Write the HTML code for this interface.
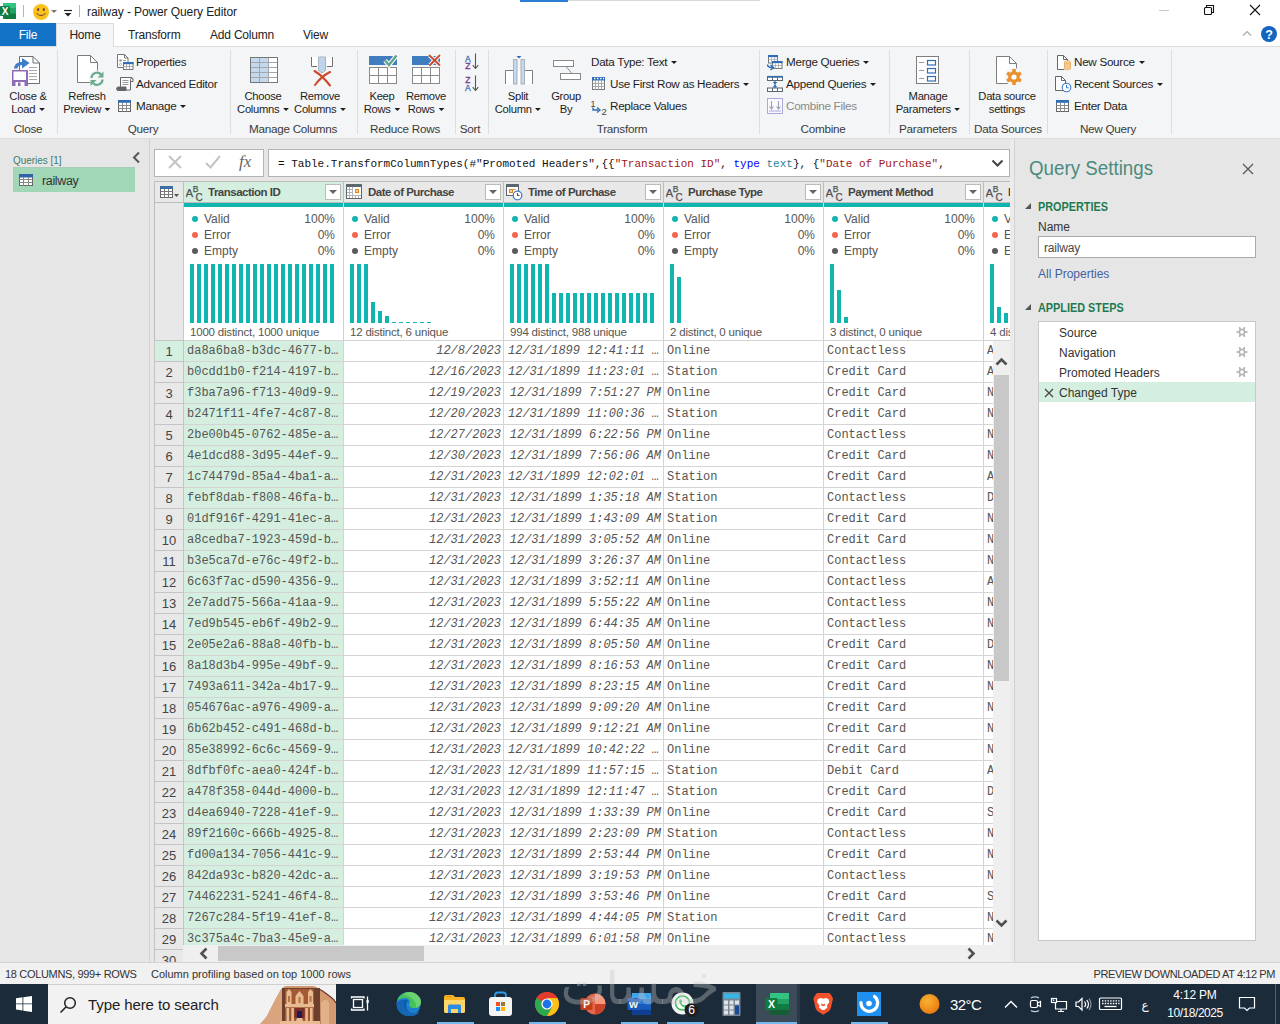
<!DOCTYPE html>
<html lang="en"><head><meta charset="utf-8"><title>railway - Power Query Editor</title>
<style>
*{box-sizing:border-box;margin:0;padding:0}
html,body{width:1280px;height:1024px;overflow:hidden;background:#e6e6e6;font-family:"Liberation Sans",sans-serif;font-size:12px;color:#262626}
body{position:relative}
.abs{position:absolute}
/* title bar */
#title{position:absolute;left:0;top:0;width:1280px;height:46px;background:#fff}
#title .tt{position:absolute;left:87px;top:5px;font-size:12px;color:#222;white-space:nowrap;letter-spacing:-0.1px}
.tab{position:absolute;top:23px;height:23px;line-height:25px;font-size:12px;letter-spacing:-0.2px;color:#222;text-align:center;white-space:nowrap}
#tfile{left:0;width:56px;background:#1272c6;color:#fff}
#thome{left:56px;width:58px;background:#f4f5f6;border:1px solid #dcdcdc;border-bottom:none;height:24px;line-height:23px}
/* ribbon */
#ribbon{z-index:1;position:absolute;left:0;top:46px;width:1280px;height:93px;background:#f4f5f6;border-top:1px solid #dcdcdc;border-bottom:1px solid #dcdcdc}
#thome{z-index:2}
.rsep{position:absolute;top:3px;width:1px;height:84px;background:#dedede}
.gl{position:absolute;top:75px;height:14px;line-height:14px;font-size:11.7px;letter-spacing:-0.25px;color:#3a3a3a;text-align:center;white-space:nowrap;transform:translateX(-50%)}
.big{position:absolute;top:42px;font-size:11.7px;line-height:13px;letter-spacing:-0.3px;color:#1e1e1e;text-align:center;white-space:nowrap;transform:translateX(-50%) scaleX(0.96)}
.sm{position:absolute;font-size:11.7px;line-height:14px;height:14px;letter-spacing:-0.3px;color:#1e1e1e;white-space:nowrap}
.sm.dis{color:#8a8a8a}
.ar{display:inline-block;width:0;height:0;border-left:3px solid transparent;border-right:3px solid transparent;border-top:3px solid #1e1e1e;vertical-align:middle;margin-left:4px;position:relative;top:0px}
.ico{position:absolute}
/* left pane */
#qp{position:absolute;left:0;top:139px;width:149px;height:823px;background:#e6e6e6}
#qsplit{position:absolute;left:149px;top:139px;width:1px;height:823px;background:#d2d2d2}
#qp .hd{position:absolute;left:13px;top:15px;font-size:11.5px;color:#3a7d6c;white-space:nowrap;transform:scaleX(0.86);transform-origin:0 0}
#qp .it{position:absolute;left:13px;top:28px;width:122px;height:25px;background:#a1d6b6;border-top:1px solid #aacbb8}
#qp .it span{position:absolute;left:29px;top:6px;font-size:12.5px;color:#333;letter-spacing:-0.35px}
/* formula bar */
.fbox{position:absolute;top:149px;height:28px;background:#fff;border:1px solid #b4b4b4}
#f1{left:154px;width:110px}
#f2{left:268px;width:742px}
#f2 .fx{position:absolute;left:9px;top:8px;font-family:"Liberation Mono",monospace;font-size:11px;white-space:pre;color:#111;letter-spacing:0px}
/* grid */
#grid{position:absolute;left:154px;top:181px;width:856px;height:781px;overflow:hidden;background:#e6e6e6}
#grid .corner{position:absolute;left:0;top:0;width:30px;height:22px;background:#e8e8e8;border:1px solid #bdbdbd}
#grid .rnhead{position:absolute;left:0;top:22px;width:30px;height:138px;background:#e8e8e8;border-left:1px solid #bdbdbd;border-right:1px solid #c8c8c8}
.ch{position:absolute;top:0;width:160px;height:22px;background:#e8e8e8;border:1px solid #bdbdbd;border-left:none;white-space:nowrap;overflow:hidden}
.ch.sel{background:#d4efdf}
.ch .ti{position:absolute;left:2px;top:2px}
.ch .cn{position:absolute;left:24px;top:4px;font-size:11.5px;font-weight:700;color:#444;letter-spacing:-0.5px}
.ch .dd{position:absolute;right:2px;top:2px;width:16px;height:16px;background:#fff;border:1px solid #bbb}
.ch .dd i{position:absolute;left:3px;top:5px;border-left:4px solid transparent;border-right:4px solid transparent;border-top:4px solid #666}
.teal{position:absolute;top:22px;width:159px;height:4px;background:#0fb5ae}
.prof{position:absolute;top:26px;width:160px;height:134px;background:#fff;border-right:1px solid #d0d0d0;overflow:hidden}
.pl{position:absolute;left:0;width:159px;height:15px;font-size:12px;color:#555}
.pl i{position:absolute;left:8px;top:4px;width:6px;height:6px;border-radius:50%}
.pl span{position:absolute;left:20px;top:0}
.pl b{position:absolute;right:8px;top:0;font-weight:400}
.bars{position:absolute;left:0;top:57px;width:159px;height:59px}
.bars i{position:absolute;bottom:0;background:#0fb5ae}
.ds{position:absolute;left:6px;top:119px;font-size:11.5px;line-height:13px;color:#555;white-space:nowrap;letter-spacing:-0.2px}
.row{position:absolute;left:0;width:860px;height:21px;border-top:1px solid #d4d4d4;background:#fff}
.rn{position:absolute;left:0;top:-1px;width:30px;height:22px;background:#e8e8e8;border:1px solid #c4c4c4;border-bottom:none;text-align:center;font-size:13px;line-height:22px;color:#444}
.row.first .rn{background:#d4efdf}
.c{position:absolute;top:0;height:20px;width:160px;border-right:1px solid #d4d4d4;font-family:"Liberation Mono",monospace;font-size:12px;line-height:21px;color:#555;white-space:pre;overflow:hidden;padding-left:3px}
.c1{left:30px;width:160px;background:#d4efdf}
.c2{left:190px;text-align:right;padding-right:2px;font-style:italic}
.c3{left:350px;font-style:italic;text-align:right;padding-right:2px;padding-left:0}
.c3.el{text-align:left;padding-left:4px;padding-right:0}
.c4{left:510px}
.c5{left:670px}
.c6{left:830px;border-right:none}
.vsb{position:absolute;left:839px;top:160px;width:17px;height:604px;background:#efefef}
.vth{position:absolute;left:1px;top:34px;width:15px;height:306px;background:#c8c8c8}
.hsb{position:absolute;left:29px;top:764px;width:827px;height:17px;background:#efefef}
.hth{position:absolute;left:35px;top:1px;width:206px;height:15px;background:#c8c8c8}
/* right pane */
#qs{position:absolute;left:1016px;top:138px;width:264px;height:824px;background:#e6e6e6}
#rsplit{position:absolute;left:1010px;top:139px;width:5px;height:823px;background:#ebebeb;border-right:1px solid #d2d2d2}
#qs .h1{position:absolute;left:13px;top:18px;font-size:20.5px;color:#4b8b7f;white-space:nowrap;transform:scaleX(0.915);transform-origin:0 0}
#qs .sec{position:absolute;left:22px;margin-top:1px;font-size:12.5px;font-weight:700;color:#217a50;white-space:nowrap;transform:scaleX(0.868);transform-origin:0 0}
#qs .tri{position:absolute;left:9px;width:0;height:0;border-left:6px solid transparent;border-bottom:6px solid #555}
#qs .lbl{position:absolute;left:22px;font-size:12px;color:#333}
#qs .inp{position:absolute;left:22px;top:98px;width:218px;height:22px;background:#fff;border:1px solid #ababab;font-size:12px;color:#484848;line-height:22px;padding-left:5px;letter-spacing:-0.2px}
#qs .lnk{position:absolute;left:22px;top:129px;font-size:12px;color:#44619d}
#qs .steps{position:absolute;left:22px;top:183px;width:218px;height:620px;background:#fff;border:1px solid #c9c9c9}
#qs .st{position:absolute;left:0;width:216px;height:20px;line-height:22px;font-size:12px;color:#333;padding-left:20px;white-space:nowrap}
#qs .st.on{background:#d4efdf}
#qs .gear{position:absolute;left:197px;top:4px}
/* status bar */
#status{position:absolute;left:0;top:962px;width:1280px;height:22px;background:#f1f1f1;border-top:1px solid #d4d4d4;font-size:11px;color:#333}
#status span{position:absolute;top:5px;white-space:nowrap}
/* taskbar */
#task{position:absolute;left:0;top:984px;width:1280px;height:40px;background:#1c2b3a;overflow:hidden}
#task .search{position:absolute;left:48px;top:0;width:288px;height:40px;background:#f2f2f2;border-top:1px solid #cfcfcf}
#task .search span{position:absolute;left:40px;top:11px;font-size:15px;color:#222;letter-spacing:-0.1px;white-space:nowrap}
.ul{position:absolute;top:38px;height:2px;background:#76b9ed}

#wm{position:absolute;left:546px;top:970px;width:188px;height:38px;overflow:hidden;pointer-events:none}
#wm span{position:absolute;left:0;top:-25px;width:188px;font-family:"DejaVu Sans",sans-serif;font-size:56px;line-height:80px;color:rgba(198,198,198,0.37);white-space:nowrap;direction:rtl;text-align:center;transform:scaleX(0.85);transform-origin:50% 50%}

</style></head>
<body>
<div id="title">
 <div class="abs" style="left:520px;top:0;width:48px;height:2px;background:#2b7cd3"></div>
 <div class="abs" style="left:568px;top:0;width:192px;height:1px;background:#d9d9d9"></div>
 <!-- excel icon -->
 <svg class="abs" style="left:0;top:3px" width="17" height="17" viewBox="0 0 17 17">
  <rect x="3" y="0" width="13" height="16" rx="1" fill="#21a366"/><rect x="3" y="0" width="13" height="5" rx="1" fill="#33c481"/><rect x="3" y="10.500" width="13" height="5.500" rx="1" fill="#107c41"/>
  <rect x="0" y="3" width="10" height="10" rx="1" fill="#107c41"/>
  <text x="5" y="11.600" font-size="10" font-weight="700" fill="#fff" text-anchor="middle" font-family="Liberation Sans, sans-serif">X</text>
 </svg>
 <div class="abs" style="left:23px;top:5px;width:1px;height:12px;background:#b5b5b5"></div>
 <svg class="abs" style="left:32px;top:3px" width="18" height="18" viewBox="0 0 18 18"><circle cx="9" cy="9" r="8" fill="#fcc21b"/><ellipse cx="6.200" cy="6.500" rx="1" ry="1.600" fill="#5a3b4a"/><ellipse cx="11.800" cy="6.500" rx="1" ry="1.600" fill="#5a3b4a"/><path d="M4.8 10.5c1.2 2.6 7.2 2.6 8.4 0" fill="none" stroke="#5a3b4a" stroke-width="1" stroke-linecap="round"/></svg>
 <div class="abs" style="left:51px;top:10px;border-left:3px solid transparent;border-right:3px solid transparent;border-top:3px solid #777"></div>
 <svg class="abs" style="left:63px;top:9px" width="10" height="9" viewBox="0 0 10 9"><path d="M1 1.5h8" stroke="#222" stroke-width="1.2"/><path d="M1.5 4h7l-3.500 3.500z" fill="#222"/></svg>
 <div class="abs" style="left:79px;top:5px;width:1px;height:12px;background:#b5b5b5"></div>
 <div class="tt">railway - Power Query Editor</div>
 <!-- window controls -->
 <div class="abs" style="left:1159px;top:10px;width:10px;height:1px;background:#c8c8c8"></div>
 <svg class="abs" style="left:1203px;top:4px" width="12" height="12" viewBox="0 0 12 12"><path d="M3.500 3V1.500h7v7H9" fill="none" stroke="#111" stroke-width="1.1"/><rect x="1.500" y="3.500" width="7" height="7" rx="1" fill="none" stroke="#111" stroke-width="1.100"/></svg>
 <svg class="abs" style="left:1249px;top:4px" width="12" height="12" viewBox="0 0 12 12"><path d="M1 1l10 10M11 1L1 11" stroke="#111" stroke-width="1.1"/></svg>
 <svg class="abs" style="left:1242px;top:30px" width="10" height="7" viewBox="0 0 10 7"><path d="M1 5.500l4-4 4 4" fill="none" stroke="#a8a8a8" stroke-width="1.100"/></svg>
 <svg class="abs" style="left:1260px;top:25px" width="18" height="18" viewBox="0 0 18 18"><circle cx="9" cy="9" r="8" fill="#1565c0"/><text x="9" y="13.500" font-size="12.500" font-weight="700" fill="#fff" text-anchor="middle" font-family="Liberation Sans, sans-serif">?</text></svg>
</div>
<div class="tab" id="tfile">File</div>
<div class="tab" id="thome">Home</div>
<div class="tab" style="left:128px">Transform</div>
<div class="tab" style="left:210px">Add Column</div>
<div class="tab" style="left:303px">View</div>
<div id="ribbon">
 <div class="rsep" style="left:57px"></div><div class="rsep" style="left:230px"></div><div class="rsep" style="left:357px"></div>
 <div class="rsep" style="left:455px"></div><div class="rsep" style="left:488px"></div><div class="rsep" style="left:759px"></div>
 <div class="rsep" style="left:889px"></div><div class="rsep" style="left:969px"></div><div class="rsep" style="left:1047px"></div><div class="rsep" style="left:1171px"></div>
 <div class="gl" style="left:28px">Close</div><div class="gl" style="left:143px">Query</div><div class="gl" style="left:293px">Manage Columns</div>
 <div class="gl" style="left:405px">Reduce Rows</div><div class="gl" style="left:470px">Sort</div><div class="gl" style="left:622px">Transform</div>
 <div class="gl" style="left:823px">Combine</div><div class="gl" style="left:928px">Parameters</div><div class="gl" style="left:1008px">Data Sources</div><div class="gl" style="left:1108px">New Query</div>
 <div class="big" style="left:28px">Close &amp;<br>Load<span class="ar"></span></div>
 <div class="big" style="left:87px">Refresh<br>Preview<span class="ar"></span></div>
 <div class="big" style="left:263px">Choose<br>Columns<span class="ar"></span></div>
 <div class="big" style="left:320px">Remove<br>Columns<span class="ar"></span></div>
 <div class="big" style="left:382px">Keep<br>Rows<span class="ar"></span></div>
 <div class="big" style="left:426px">Remove<br>Rows<span class="ar"></span></div>
 <div class="big" style="left:518px">Split<br>Column<span class="ar"></span></div>
 <div class="big" style="left:566px">Group<br>By</div>
 <div class="big" style="left:928px">Manage<br>Parameters<span class="ar"></span></div>
 <div class="big" style="left:1007px">Data source<br>settings</div>
 <div class="sm" style="left:136px;top:8px">Properties</div>
 <div class="sm" style="left:136px;top:30px">Advanced Editor</div>
 <div class="sm" style="left:136px;top:52px">Manage<span class="ar"></span></div>
 <div class="sm" style="left:591px;top:8px">Data Type: Text<span class="ar"></span></div>
 <div class="sm" style="left:610px;top:30px">Use First Row as Headers<span class="ar"></span></div>
 <div class="sm" style="left:610px;top:52px">Replace Values</div>
 <div class="sm" style="left:786px;top:8px">Merge Queries<span class="ar"></span></div>
 <div class="sm" style="left:786px;top:30px">Append Queries<span class="ar"></span></div>
 <div class="sm dis" style="left:786px;top:52px">Combine Files</div>
 <div class="sm" style="left:1074px;top:8px">New Source<span class="ar"></span></div>
 <div class="sm" style="left:1074px;top:30px">Recent Sources<span class="ar"></span></div>
 <div class="sm" style="left:1074px;top:52px">Enter Data</div>
<svg class="abs" style="left:0;top:0" width="1280" height="90" viewBox="0 47 1280 90" font-family="Liberation Sans, sans-serif">
 <!-- Close & Load -->
 <g>
  <path d="M19.500 56.500h13.500l6.500 6.500v20.500h-20z" fill="#fff" stroke="#6e6e6e"/>
  <path d="M33 56.500v6.500h6.500" fill="none" stroke="#6e6e6e"/>
  <path d="M29 67.500h8M29 70.500h8M29 73.500h8M29 76.500h8M29 79.500h8" stroke="#a8a8a8"/>
  <path d="M14 68.600C14.500 64 17.500 62 22 62v-4l7.600 5-7.600 5.600V65c-2.500 0-4.200 1-4.800 3.600z" fill="#3d7cc9"/>
  <rect x="12" y="70" width="16" height="16" rx="0.500" fill="#8f6cb5"/>
  <rect x="13.500" y="71.500" width="12.500" height="8.500" fill="#fff"/>
  <rect x="15.500" y="82" width="9" height="4" fill="#fff"/><rect x="18" y="82.500" width="2.500" height="3.500" fill="#8f6cb5"/>
 </g>
 <!-- Refresh Preview -->
 <g>
  <path d="M77.500 55.500h13l7 7v20h-20z" fill="#fff" stroke="#7d7d7d"/>
  <path d="M90.500 55.500v7h7" fill="none" stroke="#7d7d7d"/>
  <circle cx="97" cy="78.500" r="8" fill="#f4f5f6"/>
  <path d="M91.500 78a5.500 5.500 0 0 1 9.600-3.500" fill="none" stroke="#6bab8f" stroke-width="2.200"/>
  <path d="M103.500 71.500v6h-6z" fill="#6bab8f"/>
  <path d="M102.500 79.500a5.500 5.500 0 0 1-9.600 3.500" fill="none" stroke="#6bab8f" stroke-width="2.200"/>
  <path d="M90.500 86v-6h6z" fill="#6bab8f"/>
 </g>
 <!-- Properties -->
 <g>
  <path d="M117.500 54.500h7l3.500 3.500v9.500h-10.500z" fill="#fff" stroke="#777"/>
  <path d="M124.500 54.500v3.500h3.500" fill="none" stroke="#777"/>
  <circle cx="120.500" cy="60.500" r="1.300" fill="#999"/><path d="M123 60.500h3" stroke="#999"/><circle cx="120.500" cy="64.500" r="1.100" fill="none" stroke="#999" stroke-width="0.700"/>
  <rect x="123.500" y="62.500" width="9.500" height="7" fill="#fff" stroke="#777"/><rect x="123" y="62" width="10.500" height="2.200" fill="#2f6db5"/>
  <path d="M123.500 66.500h9.500M126.500 64v5.500M129.500 64v5.500" stroke="#999" stroke-width="0.800"/>
 </g>
 <!-- Advanced Editor -->
 <g>
  <path d="M120.500 77.500h10.500c1.500 0 2 1 2 2v2h-2.500v8.500h-10v-3.500h0z" fill="#fff" stroke="#666"/>
  <path d="M130.500 81.500v-2c0-1.500 2.300-1.500 2.300 0" fill="none" stroke="#666"/>
  <path d="M122.500 80.500h6M122.500 82.500h6M122.500 84.500h6" stroke="#9a9a9a"/>
  <path d="M118 87h8v3.500h-8c-1.800 0-1.800-3.500 0-3.500z" fill="#666" stroke="#666"/>
 </g>
 <!-- Manage -->
 <g>
  <rect x="118.500" y="100.500" width="12" height="11" fill="#fff" stroke="#666"/><rect x="118" y="100" width="13" height="2.800" fill="#2f6db5"/>
  <path d="M118.500 105.500h12M118.500 108.500h12M122.500 103v8.500M126.500 103v8.500" stroke="#8a8a8a"/>
 </g>
 <!-- Choose Columns -->
 <g>
  <rect x="250.500" y="57.500" width="27" height="25" fill="#fff" stroke="#8a8a8a"/>
  <rect x="251" y="58" width="18" height="24" fill="#c5d9ee"/>
  <path d="M250.500 62.500h27M250.500 67.500h27M250.500 72.500h27M250.500 77.500h27M259.500 57.500v25M268.500 57.500v25" stroke="#a3a7ad" fill="none"/>
  <rect x="250.500" y="57.500" width="27" height="25" fill="none" stroke="#777"/>
 </g>
 <!-- Remove Columns -->
 <g>
  <path d="M311.500 57v9.500h6v-9.500zM332.500 57v9.500h-6v-9.500z" fill="#fff" stroke="none"/>
  <path d="M311.500 57v9.500h5.500M332.500 57v9.500h-5.500" fill="none" stroke="#707070"/>
  <path d="M318.500 57v13.500l3.500 2.500 3.500-2.500v-13.500z" fill="#c0d4ea" stroke="#a8b4c0"/>
  <path d="M314.500 71c5 3 10.500 8 15.500 14.500M330 72c-6 3-11 7.500-15 13" fill="none" stroke="#cc4a2b" stroke-width="2.100" stroke-linecap="round"/>
 </g>
 <!-- Keep Rows -->
 <g>
  <rect x="369" y="56" width="28" height="9" fill="#3f7dbf"/>
  <rect x="369.500" y="67.500" width="27" height="16" fill="#fff" stroke="#8a8a8a"/>
  <path d="M369.500 75.500h27M378.500 67.500v16M387.500 67.500v16" stroke="#8a8a8a" fill="none"/>
  <path d="M385 60.500l4 4.500 7.500-9.500" fill="none" stroke="#f4f5f6" stroke-width="4.500"/>
  <path d="M385 60.500l4 4.500 7.500-9.500" fill="none" stroke="#5fa585" stroke-width="2.300"/>
 </g>
 <!-- Remove Rows -->
 <g>
  <rect x="412" y="56" width="28" height="9" fill="#3f7dbf"/>
  <rect x="412.500" y="67.500" width="27" height="16" fill="#fff" stroke="#8a8a8a"/>
  <path d="M412.500 75.500h27M421.500 67.500v16M430.500 67.500v16" stroke="#8a8a8a" fill="none"/>
  <path d="M429.500 55.500l10 9.500M439.500 55.500l-9.500 9.500" fill="none" stroke="#f4f5f6" stroke-width="4"/>
  <path d="M429.500 55.500l10 9.500M439.500 55.500l-9.500 9.500" fill="none" stroke="#cc4a2b" stroke-width="1.800" stroke-linecap="round"/>
 </g>
 <!-- Sort -->
 <g font-size="8.500" font-weight="400" stroke-width="0.300">
  <text x="465" y="61.500" fill="#3b6fb5" stroke="#3b6fb5">A</text><text x="465.300" y="69" fill="#7a3b8c" stroke="#7a3b8c">Z</text>
  <path d="M475.500 53.500v14.500M472.700 65.200l2.800 3.300 2.800-3.300" fill="none" stroke="#555" stroke-width="1.100"/>
  <text x="465.300" y="83" fill="#7a3b8c" stroke="#7a3b8c">Z</text><text x="465" y="90.500" fill="#3b6fb5" stroke="#3b6fb5">A</text>
  <path d="M475.500 75.500v14.500M472.700 87.200l2.800 3.300 2.800-3.300" fill="none" stroke="#555" stroke-width="1.100"/>
 </g>
 <!-- Split Column -->
 <g>
  <rect x="505.500" y="70.500" width="27" height="14" fill="#fff" stroke="none"/>
  <path d="M505.500 84v-13.500h7.500M525 70.500h7.500v13.500" fill="none" stroke="#7d7d7d"/>
  <rect x="513.500" y="59.500" width="3.500" height="24.500" fill="#c5d9ee" stroke="#a9b0b8"/>
  <rect x="521" y="59.500" width="3.500" height="24.500" fill="#c5d9ee" stroke="#a9b0b8"/>
  <path d="M516.500 56h5l-2.500 2.500z" fill="#2f6db5"/>
 </g>
 <!-- Group By -->
 <g>
  <rect x="553.500" y="60.500" width="20" height="6" fill="#fff" stroke="#8a8a8a"/>
  <rect x="560.500" y="73.500" width="20" height="6" fill="#fff" stroke="#8a8a8a"/>
  <path d="M566 66.500l6 7" stroke="#8a8a8a"/>
 </g>
 <!-- Use first row -->
 <g>
  <rect x="592.500" y="77.500" width="12" height="12" fill="#fff" stroke="#777"/>
  <rect x="592" y="77" width="13" height="3.500" fill="#2f6db5"/>
  <path d="M594 78.500h1.500M597 78.500h1.500M600 78.500h1.500M603 78.500h1" stroke="#fff" stroke-width="1.500"/>
  <path d="M592.500 83.500h12M592.500 86.500h12M595.500 80.500v9M598.500 80.500v9M601.500 80.500v9" stroke="#a0a0a0" stroke-width="0.900"/>
 </g>
 <!-- Replace values -->
 <g font-size="8">
  <text x="590.500" y="106.500" font-size="9" fill="#444">1</text><text x="601.500" y="115" font-size="9.500" fill="#444">2</text>
  <path d="M593 107.500v2.500h5.500" fill="none" stroke="#2f6db5" stroke-width="1.400"/><path d="M597 107.500l3 2.500-3 2.500" fill="none" stroke="#2f6db5" stroke-width="1.400"/>
 </g>
 <!-- Merge Queries -->
 <g>
  <rect x="768.500" y="55.500" width="9" height="7.500" fill="#fff" stroke="#777"/><rect x="768" y="55" width="10" height="2.200" fill="#2f6db5"/>
  <path d="M768.500 59.500h9M771.500 57.500v5.500M774.500 57.500v5.500" stroke="#aaa" stroke-width="0.800"/>
  <rect x="772.500" y="61.500" width="9.500" height="7" fill="#fff" stroke="#777"/><rect x="772" y="61" width="10.500" height="2.200" fill="#2f6db5"/>
  <path d="M772.500 65.500h9.500M775.500 63.500v5M778.500 63.500v5" stroke="#aaa" stroke-width="0.800"/>
  <path d="M767.500 64.500c0 2 1 3 4.500 3" fill="none" stroke="#2f6db5" stroke-width="1.500"/><path d="M770.500 65l3 2.500-3 2.500" fill="none" stroke="#2f6db5" stroke-width="1.500"/>
 </g>
 <!-- Append Queries -->
 <g>
  <rect x="767.500" y="77" width="15" height="3.500" fill="#fff" stroke="#5c666e"/><path d="M767 76.700h16" stroke="#2f6db5" stroke-width="1.600"/><path d="M772.500 77.500v3M777.500 77.500v3" stroke="#5c666e"/>
  <rect x="767.500" y="88" width="15" height="3.500" fill="#fff" stroke="#5c666e"/><path d="M772.500 88v3.500M777.500 88v3.500" stroke="#5c666e"/>
  <path d="M775 81v7" stroke="#2f6db5" stroke-width="1.200"/><path d="M772.500 82h5l-2.500 2.300zM772.500 87.200h5l-2.500-2.300z" fill="#2f6db5"/>
 </g>
 <!-- Combine Files -->
 <g>
  <rect x="767.500" y="98.500" width="15" height="15" fill="#fafaff" stroke="#a9a9dc"/>
  <path d="M771.500 101v7M778.500 101v7" stroke="#9aa0b4" stroke-width="1.100"/><path d="M769.500 106.500l2 2.500 2-2.500M776.500 106.500l2 2.500 2-2.500" fill="none" stroke="#9aa0b4" stroke-width="1.100"/>
  <path d="M769 111h12" stroke="#a9a9dc"/>
 </g>
 <!-- Manage Parameters -->
 <g>
  <rect x="916.500" y="56.500" width="22" height="27" fill="#fff" stroke="#7d7d7d"/>
  <path d="M919 62.500h5M919 70.500h5M919 78.500h5" stroke="#9a9a9a"/>
  <rect x="927.500" y="60.500" width="8" height="4.500" fill="#fff" stroke="#2f6db5" stroke-width="1.200"/>
  <rect x="927.500" y="68.500" width="8" height="4.500" fill="#fff" stroke="#2f6db5" stroke-width="1.200"/>
  <rect x="927.500" y="76.500" width="8" height="4.500" fill="#fff" stroke="#2f6db5" stroke-width="1.200"/>
 </g>
 <!-- Data source settings -->
 <g>
  <path d="M996.500 56.500h13l7 7v20h-20z" fill="#fff" stroke="#7d7d7d"/>
  <path d="M1009.500 56.500v7h7" fill="none" stroke="#7d7d7d"/>
  <circle cx="1014" cy="77" r="9" fill="#f4f5f6"/>
  <g fill="#e8912d">
   <circle cx="1014" cy="77" r="5.800"/>
   <rect x="1012.200" y="69" width="3.600" height="16" rx="0.500"/>
   <rect x="1012.200" y="69" width="3.600" height="16" rx="0.500" transform="rotate(60 1014 77)"/>
   <rect x="1012.200" y="69" width="3.600" height="16" rx="0.500" transform="rotate(120 1014 77)"/>
  </g>
  <circle cx="1014" cy="77" r="2.600" fill="#fff"/>
 </g>
 <!-- New Source -->
 <g>
  <path d="M1057.500 55.500h6l4 4v10h-10z" fill="#fff" stroke="#666"/><path d="M1063.500 55.500v4h4" fill="none" stroke="#666"/>
  <rect x="1064" y="61" width="7.500" height="9" rx="1" fill="#f4f5f6"/>
  <path d="M1064.500 62v6.500c0 1.600 6 1.600 6 0v-6.500" fill="#f2c98f" stroke="#e8a95a" stroke-width="0.800"/><ellipse cx="1067.500" cy="62" rx="3" ry="1.200" fill="#f7dcb4" stroke="#e8a95a" stroke-width="0.800"/>
 </g>
 <!-- Recent Sources -->
 <g>
  <path d="M1055.500 76.500h6l4 4v10h-10z" fill="#fff" stroke="#666"/><path d="M1061.500 76.500v4h4" fill="none" stroke="#666"/>
  <circle cx="1066.500" cy="87.500" r="4.300" fill="#fff" stroke="#3d7cc9" stroke-width="1.100"/><path d="M1066.500 85v2.800h2.200" fill="none" stroke="#3d7cc9" stroke-width="1"/>
 </g>
 <!-- Enter Data -->
 <g>
  <rect x="1056.500" y="100.500" width="12" height="11" fill="#fff" stroke="#666"/><rect x="1056" y="100" width="13" height="2.800" fill="#2f6db5"/>
  <path d="M1056.500 105.500h12M1056.500 108.500h12M1060.500 103v8.500M1064.500 103v8.500" stroke="#8a8a8a"/>
 </g>
</svg>

</div>

<div id="qp"><div class="hd">Queries [1]</div>
 <svg class="abs" style="left:132px;top:12px" width="9" height="13" viewBox="0 0 9 13"><path d="M7 1.500l-5 5 5 5" fill="none" stroke="#555" stroke-width="2"/></svg>
 <div class="it"><svg class="abs" style="left:6px;top:6px" width="14" height="12" viewBox="0 0 14 12"><rect x="0.500" y="0.500" width="13" height="11" fill="#fff" stroke="#666"/><rect x="0.500" y="0.500" width="13" height="2.500" fill="#2f64a8" stroke="#2f64a8"/><path d="M0.500 5.500h13M0.500 8.500h13M4.500 3v9M9.500 3v9" stroke="#888" fill="none"/></svg><span>railway</span></div>
</div>
<div id="qsplit"></div>
<div class="fbox" id="f1">
 <svg class="abs" style="left:13px;top:5px" width="14" height="14" viewBox="0 0 14 14"><path d="M1 1l12 12M13 1L1 13" stroke="#c4c4c4" stroke-width="2"/></svg>
 <svg class="abs" style="left:50px;top:5px" width="16" height="14" viewBox="0 0 16 14"><path d="M1 8l4.500 4.500L15 1" fill="none" stroke="#c4c4c4" stroke-width="2"/></svg>
 <div class="abs" style="left:84px;top:2px;font-family:'Liberation Serif',serif;font-style:italic;font-size:17px;color:#666">fx</div>
</div>
<div class="fbox" id="f2"><div class="fx">= Table.TransformColumnTypes(#"Promoted Headers",{{<span style="color:#a31515">"Transaction ID"</span>, <span style="color:#0000ff">type</span> <span style="color:#2b7f9e">text</span>}, {<span style="color:#a31515">"Date of Purchase"</span>,</div>
 <svg class="abs" style="left:722px;top:9px" width="13" height="9" viewBox="0 0 13 9"><path d="M1.500 1.500l5 5 5-5" fill="none" stroke="#444" stroke-width="2"/></svg>
</div>

<div id="grid">
<div class="corner"><svg width="24" height="14" viewBox="0 0 24 14" style="position:absolute;left:5px;top:4px"><rect x="0.5" y="0.5" width="12" height="11" fill="#fff" stroke="#666"/><rect x="0" y="0" width="13" height="3" fill="#3a6ea5"/><path d="M0.5 5.5h12M0.5 8.5h12M4.5 3v9M8.5 3v9" stroke="#7a7a7a" fill="none"/><path d="M14 8h5l-2.5 3z" fill="#555"/></svg></div>
<div class="rnhead"></div>
<div class="ch sel" style="left:30px"><svg class="ti" width="20" height="18" viewBox="0 0 20 18" font-family="Liberation Sans, sans-serif" fill="#505050" stroke="#505050" stroke-width="0.25"><text x="-0.5" y="13.3" font-size="11.5">A</text><text x="6.8" y="8.3" font-size="8.5">B</text><text x="9.5" y="17" font-size="10">C</text></svg><span class="cn">Transaction ID</span><span class="dd"><i></i></span></div>
<div class="teal" style="left:30px"></div>
<div class="prof" style="left:30px"><div class="pl" style="top:5px"><i style="background:#12b5ae"></i><span>Valid</span><b>100%</b></div><div class="pl" style="top:21px"><i style="background:#f4654e"></i><span>Error</span><b>0%</b></div><div class="pl" style="top:37px"><i style="background:#5a5a5a"></i><span>Empty</span><b>0%</b></div><div class="bars"><i style="left:6.0px;width:4px;height:59px"></i><i style="left:13.0px;width:4px;height:59px"></i><i style="left:20.0px;width:4px;height:59px"></i><i style="left:27.0px;width:4px;height:59px"></i><i style="left:34.0px;width:4px;height:59px"></i><i style="left:41.0px;width:4px;height:59px"></i><i style="left:48.0px;width:4px;height:59px"></i><i style="left:55.0px;width:4px;height:59px"></i><i style="left:62.0px;width:4px;height:59px"></i><i style="left:69.0px;width:4px;height:59px"></i><i style="left:76.0px;width:4px;height:59px"></i><i style="left:83.0px;width:4px;height:59px"></i><i style="left:90.0px;width:4px;height:59px"></i><i style="left:97.0px;width:4px;height:59px"></i><i style="left:104.0px;width:4px;height:59px"></i><i style="left:111.0px;width:4px;height:59px"></i><i style="left:118.0px;width:4px;height:59px"></i><i style="left:125.0px;width:4px;height:59px"></i><i style="left:132.0px;width:4px;height:59px"></i><i style="left:139.0px;width:4px;height:59px"></i><i style="left:146.0px;width:4px;height:59px"></i></div><div class="ds">1000 distinct, 1000 unique</div></div>
<div class="ch" style="left:190px"><svg class="ti" width="16" height="15" viewBox="0 0 16 15"><rect x="0" y="0" width="16" height="15" rx="0.5" fill="#5c666e"/><rect x="1" y="3" width="14" height="11" fill="#b4b4b4"/><g fill="#fff"><rect x="1" y="3" width="2" height="2"/><rect x="4" y="3" width="2" height="2"/><rect x="1" y="6" width="2" height="2"/><rect x="4" y="6" width="2" height="2"/><rect x="1" y="9" width="2" height="2"/><rect x="4" y="9" width="2" height="2"/><rect x="1" y="12" width="2" height="2"/><rect x="4" y="12" width="2" height="2"/><rect x="7" y="12" width="2" height="2"/><rect x="10" y="12" width="2" height="2"/><rect x="13" y="12" width="2" height="2"/><rect x="7" y="3" width="8" height="8"/></g><rect x="9.6" y="5.600" width="2.800" height="2.800" fill="#fff" stroke="#e8820e" stroke-width="1.200"/></svg><span class="cn">Date of Purchase</span><span class="dd"><i></i></span></div>
<div class="teal" style="left:190px"></div>
<div class="prof" style="left:190px"><div class="pl" style="top:5px"><i style="background:#12b5ae"></i><span>Valid</span><b>100%</b></div><div class="pl" style="top:21px"><i style="background:#f4654e"></i><span>Error</span><b>0%</b></div><div class="pl" style="top:37px"><i style="background:#5a5a5a"></i><span>Empty</span><b>0%</b></div><div class="bars"><i style="left:6.0px;width:4px;height:59px"></i><i style="left:13.0px;width:4px;height:59px"></i><i style="left:20.0px;width:4px;height:59px"></i><i style="left:27.0px;width:4px;height:21px"></i><i style="left:34.0px;width:4px;height:12px"></i><i style="left:41.0px;width:4px;height:7px"></i><i style="left:48.0px;width:4px;height:1px"></i><i style="left:55.0px;width:4px;height:1px"></i><i style="left:62.0px;width:4px;height:1px"></i><i style="left:69.0px;width:4px;height:1px"></i><i style="left:76.0px;width:4px;height:1px"></i><i style="left:83.0px;width:4px;height:1px"></i></div><div class="ds">12 distinct, 6 unique</div></div>
<div class="ch" style="left:350px"><svg class="ti" width="18" height="17" viewBox="0 0 18 17"><rect x="0" y="0" width="13" height="12" rx="0.5" fill="#5c666e"/><rect x="1" y="3" width="11" height="8" fill="#fff"/><path d="M7 5.500h3" stroke="#b4b4b4"/><rect x="3.600" y="5.600" width="2.800" height="2.800" fill="#fff" stroke="#e8820e" stroke-width="1.200"/><circle cx="11.500" cy="11.500" r="4.300" fill="#fff" stroke="#4a7fc0" stroke-width="1.300"/><path d="M11.500 9v2.500h2" stroke="#555" stroke-width="1.100" fill="none"/></svg><span class="cn">Time of Purchase</span><span class="dd"><i></i></span></div>
<div class="teal" style="left:350px"></div>
<div class="prof" style="left:350px"><div class="pl" style="top:5px"><i style="background:#12b5ae"></i><span>Valid</span><b>100%</b></div><div class="pl" style="top:21px"><i style="background:#f4654e"></i><span>Error</span><b>0%</b></div><div class="pl" style="top:37px"><i style="background:#5a5a5a"></i><span>Empty</span><b>0%</b></div><div class="bars"><i style="left:6.0px;width:4px;height:59px"></i><i style="left:13.0px;width:4px;height:59px"></i><i style="left:20.0px;width:4px;height:59px"></i><i style="left:27.0px;width:4px;height:59px"></i><i style="left:34.0px;width:4px;height:59px"></i><i style="left:41.0px;width:4px;height:59px"></i><i style="left:48.0px;width:4px;height:30px"></i><i style="left:55.0px;width:4px;height:30px"></i><i style="left:62.0px;width:4px;height:30px"></i><i style="left:69.0px;width:4px;height:30px"></i><i style="left:76.0px;width:4px;height:30px"></i><i style="left:83.0px;width:4px;height:30px"></i><i style="left:90.0px;width:4px;height:30px"></i><i style="left:97.0px;width:4px;height:30px"></i><i style="left:104.0px;width:4px;height:30px"></i><i style="left:111.0px;width:4px;height:30px"></i><i style="left:118.0px;width:4px;height:30px"></i><i style="left:125.0px;width:4px;height:30px"></i><i style="left:132.0px;width:4px;height:30px"></i><i style="left:139.0px;width:4px;height:30px"></i><i style="left:146.0px;width:4px;height:30px"></i></div><div class="ds">994 distinct, 988 unique</div></div>
<div class="ch" style="left:510px"><svg class="ti" width="20" height="18" viewBox="0 0 20 18" font-family="Liberation Sans, sans-serif" fill="#505050" stroke="#505050" stroke-width="0.25"><text x="-0.5" y="13.3" font-size="11.5">A</text><text x="6.8" y="8.3" font-size="8.5">B</text><text x="9.5" y="17" font-size="10">C</text></svg><span class="cn">Purchase Type</span><span class="dd"><i></i></span></div>
<div class="teal" style="left:510px"></div>
<div class="prof" style="left:510px"><div class="pl" style="top:5px"><i style="background:#12b5ae"></i><span>Valid</span><b>100%</b></div><div class="pl" style="top:21px"><i style="background:#f4654e"></i><span>Error</span><b>0%</b></div><div class="pl" style="top:37px"><i style="background:#5a5a5a"></i><span>Empty</span><b>0%</b></div><div class="bars"><i style="left:6.0px;width:4px;height:59px"></i><i style="left:13.0px;width:4px;height:46px"></i></div><div class="ds">2 distinct, 0 unique</div></div>
<div class="ch" style="left:670px"><svg class="ti" width="20" height="18" viewBox="0 0 20 18" font-family="Liberation Sans, sans-serif" fill="#505050" stroke="#505050" stroke-width="0.25"><text x="-0.5" y="13.3" font-size="11.5">A</text><text x="6.8" y="8.3" font-size="8.5">B</text><text x="9.5" y="17" font-size="10">C</text></svg><span class="cn">Payment Method</span><span class="dd"><i></i></span></div>
<div class="teal" style="left:670px"></div>
<div class="prof" style="left:670px"><div class="pl" style="top:5px"><i style="background:#12b5ae"></i><span>Valid</span><b>100%</b></div><div class="pl" style="top:21px"><i style="background:#f4654e"></i><span>Error</span><b>0%</b></div><div class="pl" style="top:37px"><i style="background:#5a5a5a"></i><span>Empty</span><b>0%</b></div><div class="bars"><i style="left:6.0px;width:4px;height:59px"></i><i style="left:13.0px;width:4px;height:33px"></i><i style="left:20.0px;width:4px;height:6px"></i></div><div class="ds">3 distinct, 0 unique</div></div>
<div class="ch" style="left:830px"><svg class="ti" width="20" height="18" viewBox="0 0 20 18" font-family="Liberation Sans, sans-serif" fill="#505050" stroke="#505050" stroke-width="0.25"><text x="-0.5" y="13.3" font-size="11.5">A</text><text x="6.8" y="8.3" font-size="8.5">B</text><text x="9.5" y="17" font-size="10">C</text></svg><span class="cn">R</span><span class="dd"><i></i></span></div>
<div class="teal" style="left:830px"></div>
<div class="prof" style="left:830px"><div class="pl" style="top:5px"><i style="background:#12b5ae"></i><span>Valid</span><b>100%</b></div><div class="pl" style="top:21px"><i style="background:#f4654e"></i><span>Error</span><b>0%</b></div><div class="pl" style="top:37px"><i style="background:#5a5a5a"></i><span>Empty</span><b>0%</b></div><div class="bars"><i style="left:6.0px;width:4px;height:59px"></i><i style="left:13.0px;width:4px;height:16px"></i><i style="left:20.0px;width:4px;height:10px"></i></div><div class="ds">4 distinct, 0 unique</div></div>
<div class="row first" style="top:159px"><div class="rn">1</div><div class="c c1">da8a6ba8-b3dc-4677-b…</div><div class="c c2">12/8/2023</div><div class="c c3 el">12/31/1899 12:41:11 …</div><div class="c c4">Online</div><div class="c c5">Contactless</div><div class="c c6">A</div></div>
<div class="row" style="top:180px"><div class="rn">2</div><div class="c c1">b0cdd1b0-f214-4197-b…</div><div class="c c2">12/16/2023</div><div class="c c3 el">12/31/1899 11:23:01 …</div><div class="c c4">Station</div><div class="c c5">Credit Card</div><div class="c c6">A</div></div>
<div class="row" style="top:201px"><div class="rn">3</div><div class="c c1">f3ba7a96-f713-40d9-9…</div><div class="c c2">12/19/2023</div><div class="c c3">12/31/1899 7:51:27 PM</div><div class="c c4">Online</div><div class="c c5">Credit Card</div><div class="c c6">N</div></div>
<div class="row" style="top:222px"><div class="rn">4</div><div class="c c1">b2471f11-4fe7-4c87-8…</div><div class="c c2">12/20/2023</div><div class="c c3 el">12/31/1899 11:00:36 …</div><div class="c c4">Station</div><div class="c c5">Credit Card</div><div class="c c6">N</div></div>
<div class="row" style="top:243px"><div class="rn">5</div><div class="c c1">2be00b45-0762-485e-a…</div><div class="c c2">12/27/2023</div><div class="c c3">12/31/1899 6:22:56 PM</div><div class="c c4">Online</div><div class="c c5">Contactless</div><div class="c c6">N</div></div>
<div class="row" style="top:264px"><div class="rn">6</div><div class="c c1">4e1dcd88-3d95-44ef-9…</div><div class="c c2">12/30/2023</div><div class="c c3">12/31/1899 7:56:06 AM</div><div class="c c4">Online</div><div class="c c5">Credit Card</div><div class="c c6">N</div></div>
<div class="row" style="top:285px"><div class="rn">7</div><div class="c c1">1c74479d-85a4-4ba1-a…</div><div class="c c2">12/31/2023</div><div class="c c3 el">12/31/1899 12:02:01 …</div><div class="c c4">Station</div><div class="c c5">Credit Card</div><div class="c c6">A</div></div>
<div class="row" style="top:306px"><div class="rn">8</div><div class="c c1">febf8dab-f808-46fa-b…</div><div class="c c2">12/31/2023</div><div class="c c3">12/31/1899 1:35:18 AM</div><div class="c c4">Station</div><div class="c c5">Contactless</div><div class="c c6">D</div></div>
<div class="row" style="top:327px"><div class="rn">9</div><div class="c c1">01df916f-4291-41ec-a…</div><div class="c c2">12/31/2023</div><div class="c c3">12/31/1899 1:43:09 AM</div><div class="c c4">Station</div><div class="c c5">Credit Card</div><div class="c c6">N</div></div>
<div class="row" style="top:348px"><div class="rn">10</div><div class="c c1">a8cedba7-1923-459d-b…</div><div class="c c2">12/31/2023</div><div class="c c3">12/31/1899 3:05:52 AM</div><div class="c c4">Online</div><div class="c c5">Credit Card</div><div class="c c6">N</div></div>
<div class="row" style="top:369px"><div class="rn">11</div><div class="c c1">b3e5ca7d-e76c-49f2-b…</div><div class="c c2">12/31/2023</div><div class="c c3">12/31/1899 3:26:37 AM</div><div class="c c4">Online</div><div class="c c5">Contactless</div><div class="c c6">N</div></div>
<div class="row" style="top:390px"><div class="rn">12</div><div class="c c1">6c63f7ac-d590-4356-9…</div><div class="c c2">12/31/2023</div><div class="c c3">12/31/1899 3:52:11 AM</div><div class="c c4">Online</div><div class="c c5">Contactless</div><div class="c c6">A</div></div>
<div class="row" style="top:411px"><div class="rn">13</div><div class="c c1">2e7add75-566a-41aa-9…</div><div class="c c2">12/31/2023</div><div class="c c3">12/31/1899 5:55:22 AM</div><div class="c c4">Online</div><div class="c c5">Contactless</div><div class="c c6">N</div></div>
<div class="row" style="top:432px"><div class="rn">14</div><div class="c c1">7ed9b545-eb6f-49b2-9…</div><div class="c c2">12/31/2023</div><div class="c c3">12/31/1899 6:44:35 AM</div><div class="c c4">Online</div><div class="c c5">Contactless</div><div class="c c6">N</div></div>
<div class="row" style="top:453px"><div class="rn">15</div><div class="c c1">2e05e2a6-88a8-40fb-b…</div><div class="c c2">12/31/2023</div><div class="c c3">12/31/1899 8:05:50 AM</div><div class="c c4">Online</div><div class="c c5">Credit Card</div><div class="c c6">D</div></div>
<div class="row" style="top:474px"><div class="rn">16</div><div class="c c1">8a18d3b4-995e-49bf-9…</div><div class="c c2">12/31/2023</div><div class="c c3">12/31/1899 8:16:53 AM</div><div class="c c4">Online</div><div class="c c5">Credit Card</div><div class="c c6">N</div></div>
<div class="row" style="top:495px"><div class="rn">17</div><div class="c c1">7493a611-342a-4b17-9…</div><div class="c c2">12/31/2023</div><div class="c c3">12/31/1899 8:23:15 AM</div><div class="c c4">Online</div><div class="c c5">Credit Card</div><div class="c c6">N</div></div>
<div class="row" style="top:516px"><div class="rn">18</div><div class="c c1">054676ac-a976-4909-a…</div><div class="c c2">12/31/2023</div><div class="c c3">12/31/1899 9:09:20 AM</div><div class="c c4">Online</div><div class="c c5">Credit Card</div><div class="c c6">N</div></div>
<div class="row" style="top:537px"><div class="rn">19</div><div class="c c1">6b62b452-c491-468d-b…</div><div class="c c2">12/31/2023</div><div class="c c3">12/31/1899 9:12:21 AM</div><div class="c c4">Online</div><div class="c c5">Credit Card</div><div class="c c6">N</div></div>
<div class="row" style="top:558px"><div class="rn">20</div><div class="c c1">85e38992-6c6c-4569-9…</div><div class="c c2">12/31/2023</div><div class="c c3 el">12/31/1899 10:42:22 …</div><div class="c c4">Online</div><div class="c c5">Credit Card</div><div class="c c6">N</div></div>
<div class="row" style="top:579px"><div class="rn">21</div><div class="c c1">8dfbf0fc-aea0-424f-b…</div><div class="c c2">12/31/2023</div><div class="c c3 el">12/31/1899 11:57:15 …</div><div class="c c4">Station</div><div class="c c5">Debit Card</div><div class="c c6">A</div></div>
<div class="row" style="top:600px"><div class="rn">22</div><div class="c c1">a478f358-044d-4000-b…</div><div class="c c2">12/31/2023</div><div class="c c3 el">12/31/1899 12:11:47 …</div><div class="c c4">Station</div><div class="c c5">Credit Card</div><div class="c c6">D</div></div>
<div class="row" style="top:621px"><div class="rn">23</div><div class="c c1">d4ea6940-7228-41ef-9…</div><div class="c c2">12/31/2023</div><div class="c c3">12/31/1899 1:33:39 PM</div><div class="c c4">Online</div><div class="c c5">Credit Card</div><div class="c c6">S</div></div>
<div class="row" style="top:642px"><div class="rn">24</div><div class="c c1">89f2160c-666b-4925-8…</div><div class="c c2">12/31/2023</div><div class="c c3">12/31/1899 2:23:09 PM</div><div class="c c4">Station</div><div class="c c5">Contactless</div><div class="c c6">N</div></div>
<div class="row" style="top:663px"><div class="rn">25</div><div class="c c1">fd00a134-7056-441c-9…</div><div class="c c2">12/31/2023</div><div class="c c3">12/31/1899 2:53:44 PM</div><div class="c c4">Online</div><div class="c c5">Credit Card</div><div class="c c6">N</div></div>
<div class="row" style="top:684px"><div class="rn">26</div><div class="c c1">842da93c-b820-42dc-a…</div><div class="c c2">12/31/2023</div><div class="c c3">12/31/1899 3:19:53 PM</div><div class="c c4">Online</div><div class="c c5">Contactless</div><div class="c c6">N</div></div>
<div class="row" style="top:705px"><div class="rn">27</div><div class="c c1">74462231-5241-46f4-8…</div><div class="c c2">12/31/2023</div><div class="c c3">12/31/1899 3:53:46 PM</div><div class="c c4">Online</div><div class="c c5">Credit Card</div><div class="c c6">S</div></div>
<div class="row" style="top:726px"><div class="rn">28</div><div class="c c1">7267c284-5f19-41ef-8…</div><div class="c c2">12/31/2023</div><div class="c c3">12/31/1899 4:44:05 PM</div><div class="c c4">Station</div><div class="c c5">Credit Card</div><div class="c c6">N</div></div>
<div class="row" style="top:747px"><div class="rn">29</div><div class="c c1">3c375a4c-7ba3-45e9-a…</div><div class="c c2">12/31/2023</div><div class="c c3">12/31/1899 6:01:58 PM</div><div class="c c4">Online</div><div class="c c5">Contactless</div><div class="c c6">N</div></div>
<div class="row" style="top:768px"><div class="rn">30</div><div class="c c1"></div><div class="c c2"></div><div class="c c3"></div><div class="c c4"></div><div class="c c5"></div><div class="c c6"></div></div>
<div class="vsb"><svg width="15" height="12" viewBox="0 0 15 12" style="position:absolute;left:1px;top:15px"><path d="M2.5 8.5l5-5 5 5" fill="none" stroke="#505050" stroke-width="2.6"/></svg><div class="vth"></div><svg width="15" height="12" viewBox="0 0 15 12" style="position:absolute;left:1px;top:576px"><path d="M2.5 3.5l5 5 5-5" fill="none" stroke="#505050" stroke-width="2.6"/></svg></div>
<div class="hsb"><svg width="12" height="15" viewBox="0 0 12 15" style="position:absolute;left:15px;top:1px"><path d="M8.5 2.5l-5 5 5 5" fill="none" stroke="#505050" stroke-width="2.6"/></svg><div class="hth"></div><svg width="12" height="15" viewBox="0 0 12 15" style="position:absolute;left:782px;top:1px"><path d="M3.5 2.5l5 5-5 5" fill="none" stroke="#505050" stroke-width="2.6"/></svg></div>
</div>
<div id="rsplit"></div>
<div id="qs">
 <div class="h1">Query Settings</div>
 <svg class="abs" style="left:226px;top:25px" width="12" height="12" viewBox="0 0 12 12"><path d="M1 1l10 10M11 1L1 11" stroke="#555" stroke-width="1.200"/></svg>
 <div class="tri" style="top:65px"></div><div class="sec" style="top:61px">PROPERTIES</div>
 <div class="lbl" style="top:82px">Name</div>
 <div class="inp">railway</div>
 <div class="lnk">All Properties</div>
 <div class="tri" style="top:166px"></div><div class="sec" style="top:162px">APPLIED STEPS</div>
 <div class="steps">
  <div class="st" style="top:0px">Source<svg class="gear" width="12" height="12" viewBox="-6 -6 12 12"><g stroke="#b3b3b3" stroke-width="1.7"><path d="M-5.500 0h11"/><path d="M-5.500 0h11" transform="rotate(60)"/><path d="M-5.500 0h11" transform="rotate(120)"/></g><circle r="2.600" fill="#fff" stroke="#b3b3b3" stroke-width="1.500"/></svg></div>
  <div class="st" style="top:20px">Navigation<svg class="gear" width="12" height="12" viewBox="-6 -6 12 12"><g stroke="#b3b3b3" stroke-width="1.7"><path d="M-5.500 0h11"/><path d="M-5.500 0h11" transform="rotate(60)"/><path d="M-5.500 0h11" transform="rotate(120)"/></g><circle r="2.600" fill="#fff" stroke="#b3b3b3" stroke-width="1.500"/></svg></div>
  <div class="st" style="top:40px">Promoted Headers<svg class="gear" width="12" height="12" viewBox="-6 -6 12 12"><g stroke="#b3b3b3" stroke-width="1.7"><path d="M-5.500 0h11"/><path d="M-5.500 0h11" transform="rotate(60)"/><path d="M-5.500 0h11" transform="rotate(120)"/></g><circle r="2.600" fill="#fff" stroke="#b3b3b3" stroke-width="1.500"/></svg></div>
  <div class="st on" style="top:60px"><svg class="abs" style="left:5px;top:6px" width="10" height="10" viewBox="0 0 10 10"><path d="M1 1l8 8M9 1L1 9" stroke="#444" stroke-width="1.200"/></svg>Changed Type</div>
 </div>
</div>

<div id="status"><span style="left:5px;letter-spacing:-0.33px">18 COLUMNS, 999+ ROWS</span><span style="left:151px">Column profiling based on top 1000 rows</span><span style="right:5px;letter-spacing:-0.41px">PREVIEW DOWNLOADED AT 4:12 PM</span></div>
<div id="task">
 <svg class="abs" style="left:16px;top:12px" width="16" height="16" viewBox="0 0 16 16"><path d="M0 2.200l6.500-.9v6.200H0zM7.300 1.200L16 0v7.500H7.300zM0 8.300h6.500v6.200L0 13.600zM7.300 8.300H16V16l-8.700-1.200z" fill="#fff"/></svg>
 <div class="search"><svg class="abs" style="left:11px;top:11px" width="18" height="18" viewBox="0 0 18 18"><circle cx="11" cy="7" r="5.300" fill="none" stroke="#222" stroke-width="1.500"/><path d="M7.200 10.800L1.500 16.500" stroke="#222" stroke-width="1.600"/></svg><span>Type here to search</span></div>
<svg class="abs" style="left:0;top:0" width="1280" height="40" viewBox="0 984 1280 40" font-family="Liberation Sans, sans-serif">
 <!-- Petra -->
 <g>
  <path d="M260 1024c4-4 7-7 9-12 3-6 6-12 10-19 2-4 4-6.500 7-7h27c3 .5 5 2 8 5 3 3 6 4 9 6 3 2 5 5 6 7.500v19.500z" fill="#cf9670"/>
  <path d="M260 1024c4-4 7-7 9-12 3-6 6-12 10-19 1-2 2-3.500 3.500-5v36z" fill="#d9a47e"/>
  <path d="M282 988h38l.5 36h-38.500z" fill="#6e3f2b"/>
  <path d="M320 990c4 2 7 5 10 7 3 2 5 4 6 6.500v20.500h-15.500z" fill="#d39a72"/>
  <path d="M321 1003c1-2 3-3 4.500-3 2 0 3 1 3.500 3v21h-8z" fill="#e2b18c"/>
  <path d="M320 989.500c4 2 7 5 10 7 3 2 5 4 6 6.500" fill="none" stroke="#6b2f22" stroke-width="1.200"/>
  <rect x="285" y="989" width="29" height="35" fill="#a25a34"/>
  <g fill="#e9bb93">
   <path d="M286.500 992l2.500-3 2.500 3v12h-5z"/><path d="M308 992l2.500-3 2.500 3v12h-5z"/>
   <path d="M295.500 996l4-5 4 5v8h-8z"/>
   <rect x="285" y="1004" width="29" height="3.200"/>
   <rect x="286.500" y="1008" width="2.600" height="13"/><rect x="291.300" y="1008" width="2.600" height="13"/>
   <rect x="305.300" y="1008" width="2.600" height="13"/><rect x="310" y="1008" width="2.600" height="13"/>
   <path d="M296 1021l1-3h5l1 3z"/>
   <rect x="280" y="1021" width="40" height="3"/>
  </g>
  <g fill="#b9733f"><rect x="288" y="996" width="2" height="6"/><rect x="309.500" y="996" width="2" height="6"/><rect x="298.500" y="997" width="2" height="6"/></g>
  <rect x="294.500" y="1008" width="10" height="10" fill="#7a2f2a"/>
  <rect x="297" y="1011" width="5" height="7" fill="#231a52"/>
 </g>
 <!-- task view -->
 <g fill="none" stroke="#fff" stroke-width="1.300">
  <rect x="353.500" y="999.500" width="9" height="8"/><path d="M351.500 998.500v-1.500h12.500v1.500M351.500 1008.500v1.500h12.500v-1.500M367.500 996.500v14"/>
 </g>
 <rect x="366.500" y="1000" width="2.200" height="3" fill="#fff"/>
 <!-- Edge -->
 <g>
  <circle cx="408.500" cy="1004" r="12" fill="#1b7fd1"/>
  <path d="M397 1001c2-6 7-9 12-9 7 0 12 5 12 10 0 4-3 6-7 6-3 0-5-1-5-3 0-1 1-2 1-3 0-2-2-4-5-4-4 0-7 2-8 3z" fill="#46c25a"/>
  <path d="M409 992c7 0 12 5 12 10 0 3-2 5-5 6 1-6-4-12-12-13 1-2 3-3 5-3z" fill="#7ad97a" opacity=".7"/>
  <path d="M397 1003c0 8 6 13 13 13 3 0 6-1 8-2-7 1-12-3-12-9 0-2 1-4 2-5-5-1-9 1-11 3z" fill="#0c59a4"/>
  <path d="M404 1004c0 5 4 9 10 9 2 0 4-.5 6-1.500-2 2.500-5 4.500-9.500 4.500-7 0-13-5-13-13 2-2 5-3 8-2.500-1 1-1.500 2-1.500 3.500z" fill="#1766b5"/>
 </g>
 <!-- Explorer -->
 <g>
  <path d="M444 997c0-1 .8-2 2-2h7l2 2h8c1.200 0 2 .8 2 2v12c0 1-.8 2-2 2h-17c-1.200 0-2-1-2-2z" fill="#f7b526"/>
  <path d="M444 1000h21v11c0 1-.8 2-2 2h-17c-1.200 0-2-1-2-2z" fill="#fcd667"/>
  <path d="M448 1013v-7c0-1 .8-1.500 1.500-1.500h10c.8 0 1.500.5 1.500 1.500v7h-3v-4h-7v4z" fill="#2d8be0"/>
  <rect x="446" y="996" width="6" height="1.200" fill="#e69a12"/>
 </g>
 <!-- Store -->
 <g>
  <path d="M495 998v-2.500c0-2 1.500-3 3-3h5c1.500 0 3 1 3 3v2.500" fill="none" stroke="#2d9be8" stroke-width="1.800"/>
  <rect x="489" y="997" width="23" height="19" rx="3" fill="#f4f4f4"/>
  <rect x="496" y="1002" width="4" height="4" fill="#f25022"/><rect x="501" y="1002" width="4" height="4" fill="#9a7a2a"/>
  <rect x="496" y="1007" width="4" height="4" fill="#1e90f0"/><rect x="501" y="1007" width="4" height="4" fill="#ffb900"/>
 </g>
 <!-- Chrome -->
 <g>
  <circle cx="547" cy="1004" r="12" fill="#e33b2e"/>
  <path d="M547 1004l-10.400 6a12 12 0 0 0 10.400 6l5.200-9z" fill="#2da94f" transform="rotate(0 547 1004)"/>
  <path d="M536.600 1010a12 12 0 0 0 10.400 6l5.500-9.500-5.500-2.500-10.400-6a12 12 0 0 0 0 12z" fill="#2da94f"/>
  <path d="M547 1016a12 12 0 0 0 10.400-18h-10.400l5.200 9z" fill="#fbc116"/>
  <path d="M536.600 998a12 12 0 0 1 20.800 0h-10.400z" fill="#e33b2e"/>
  <circle cx="547" cy="1004" r="5.600" fill="#fff"/><circle cx="547" cy="1004" r="4.400" fill="#1a73e8"/>
 </g>
 <!-- PowerPoint -->
 <g>
  <circle cx="595" cy="1004" r="10.500" fill="#e8664a"/>
  <path d="M595 993.500a10.500 10.500 0 0 1 10.500 10.500h-10.500z" fill="#f59a80"/>
  <path d="M595 1014.500a10.500 10.500 0 0 0 10.500-10.500h-10.500z" fill="#c9442a"/>
  <rect x="580.500" y="998" width="12" height="12" rx="1" fill="#c43e1c"/>
  <text x="586.500" y="1007.800" font-size="10" font-weight="700" fill="#fff" text-anchor="middle">P</text>
 </g>
 <!-- Word -->
 <g>
  <rect x="632" y="993" width="19" height="22" rx="1.500" fill="#2b7cd3"/>
  <rect x="632" y="993" width="19" height="6" fill="#41a5ee"/><rect x="632" y="1004" width="19" height="5.500" fill="#185abd"/><rect x="632" y="1009.500" width="19" height="5.500" rx="1" fill="#103f91"/>
  <rect x="627.500" y="998" width="12" height="12" rx="1" fill="#185abd"/>
  <text x="633.500" y="1007.800" font-size="9.500" font-weight="700" fill="#fff" text-anchor="middle">W</text>
 </g>
 <!-- WhatsApp -->
 <g>
  <circle cx="682.500" cy="1003.500" r="11" fill="#f4f4f4"/>
  <circle cx="682.500" cy="1003" r="7" fill="#fff" stroke="#3bc35a" stroke-width="1.600"/>
  <path d="M679.500 1000c.5-1 1.500-.8 1.800 0l.6 1.400c.2.500-.7 1-.5 1.500.5 1 1.500 2 2.700 2.500.5.200 1-.8 1.500-.5l1.300.7c.8.400.6 1.400-.2 1.800-3 1.500-8.500-4-7.200-7.400z" fill="#3bc35a"/>
  <circle cx="691.500" cy="1010" r="7" fill="#1f1f1f"/>
  <text x="691.500" y="1014.300" font-size="12" fill="#fff" text-anchor="middle">6</text>
 </g>
 <!-- Calculator -->
 <g>
  <rect x="722.500" y="992" width="18" height="24" rx="1" fill="#7a8794"/>
  <rect x="724" y="993.500" width="15" height="5" fill="#38b6e8"/>
  <g fill="#dfe3e8"><rect x="724" y="1000.500" width="4" height="4"/><rect x="729.500" y="1000.500" width="4" height="4"/><rect x="735" y="1000.500" width="4" height="4"/>
  <rect x="724" y="1005.500" width="4" height="4"/><rect x="729.500" y="1005.500" width="4" height="4"/><rect x="724" y="1010.500" width="4" height="4"/><rect x="729.500" y="1010.500" width="4" height="4"/></g>
  <rect x="735" y="1005.500" width="4" height="9" fill="#174a9c"/>
 </g>
 <!-- Excel (active) -->
 <rect x="756" y="984" width="41" height="40" fill="#3c4a59"/><rect x="797" y="984" width="3" height="40" fill="#2a3847"/>
 <g>
  <rect x="770" y="993" width="19" height="22" rx="1.500" fill="#21a366"/>
  <rect x="770" y="993" width="19" height="6" fill="#33c481"/><rect x="770" y="1004" width="19" height="5.500" fill="#107c41"/><rect x="770" y="1009.500" width="19" height="5.500" rx="1" fill="#185c37"/>
  <rect x="765.500" y="998" width="12" height="12" rx="1" fill="#107c41"/>
  <text x="771.500" y="1008" font-size="10.500" font-weight="700" fill="#fff" text-anchor="middle">X</text>
 </g>
 <!-- Brave -->
 <g>
  <path d="M815 995.500l2-2.500h12.500l2 2.500 1.500 3-2 9c-.5 2-2 3.500-3.500 4.500l-4.300 2.700-4.300-2.700c-1.500-1-3-2.500-3.500-4.500l-2-9z" fill="#f0532b"/>
  <path d="M818 999l2.500-1 2.700.8 2.700-.8 2.500 1 1 3-2.500 3.500.5 2-3 2.500h-2.400l-3-2.500.5-2-2.500-3.500z" fill="#fff"/>
  <path d="M821 1003.500l2.200 1 2.200-1-.8 2.500h-2.800z" fill="#f0532b"/>
 </g>
 <!-- Blue app -->
 <g>
  <rect x="857" y="992" width="24" height="24" fill="#1e90f0"/>
  <path d="M874.500 996.500a8.300 8.300 0 1 1-13.500 6" fill="none" stroke="#fff" stroke-width="3.200" stroke-linecap="round"/>
  <circle cx="869" cy="1003.500" r="2.800" fill="#fff"/>
 </g>
 <!-- weather -->
 <defs><radialGradient id="sun" cx=".4" cy=".35" r=".7"><stop offset="0" stop-color="#f9b233"/><stop offset="1" stop-color="#e8780f"/></radialGradient></defs>
 <circle cx="929.500" cy="1004" r="10" fill="url(#sun)"/>
 <text x="950" y="1009.500" font-size="15" fill="#fff" letter-spacing="-0.600">32°C</text>
 <!-- tray -->
 <path d="M1005 1007.500l6-6 6 6" fill="none" stroke="#fff" stroke-width="1.400"/>
 <g fill="none" stroke="#fff" stroke-width="1.200">
  <rect x="1030.500" y="1000.500" width="7" height="7" rx="1.500"/><path d="M1037.500 1003l3-1.500v5l-3-1.500"/><path d="M1031 998c2-1.500 6-1.500 8 0M1031 1010.500c2 1.500 6 1.500 8 0" stroke="#c8ccd0"/>
  <path d="M1055.500 1001.500h11v7.500h-11zM1058 1011.500h6M1061 1009v2.500"/><rect x="1051.500" y="998.500" width="5" height="4" fill="#1c2b3a"/><path d="M1053 999.500l1 1.500"/>
  <path d="M1076 1002v4.500h2.500l3.500 3.500v-11.500l-3.500 3.500z"/><path d="M1084.500 1001.500c1.200 1.500 1.200 4 0 5.500M1086.800 1000c2 2.500 2 6 0 8.500"/><path d="M1089 998.500c2.500 3.500 2.500 8 0 11.500" stroke="#8a949e"/>
  <rect x="1099.500" y="998" width="22" height="11.500" rx="1"/>
 </g>
 <path d="M1102 1000.800h17.500M1102 1003.500h17.500" stroke="#fff" stroke-width="1.300" stroke-dasharray="1.500 1.200"/><path d="M1104.500 1006.500h12" stroke="#fff" stroke-width="1.300"/>
 <text x="1145" y="1009" font-size="12" fill="#fff" text-anchor="middle" font-family="DejaVu Sans, sans-serif">ع</text>
 <text x="1195" y="999" font-size="12" fill="#fff" text-anchor="middle" letter-spacing="-0.200">4:12 PM</text>
 <text x="1195" y="1017" font-size="12" fill="#fff" text-anchor="middle" letter-spacing="-0.450">10/18/2025</text>
 <path d="M1239.500 997.500h15v10.500h-5l-2.500 2.500-2.500-2.500h-5z" fill="none" stroke="#fff" stroke-width="1.200"/>
 <rect x="1275" y="984" width="1" height="40" fill="#56626e"/>
 <!-- underlines -->
 <g fill="#76b9ed"><rect x="437" y="1022" width="37" height="2"/><rect x="529" y="1022" width="37" height="2"/><rect x="621" y="1022" width="37" height="2"/><rect x="667" y="1022" width="37" height="2"/><rect x="756" y="1022" width="41" height="2"/><rect x="851" y="1022" width="37" height="2"/></g>
</svg>

</div>
<div id="wm"><span>خمسات</span></div>

</body></html>
